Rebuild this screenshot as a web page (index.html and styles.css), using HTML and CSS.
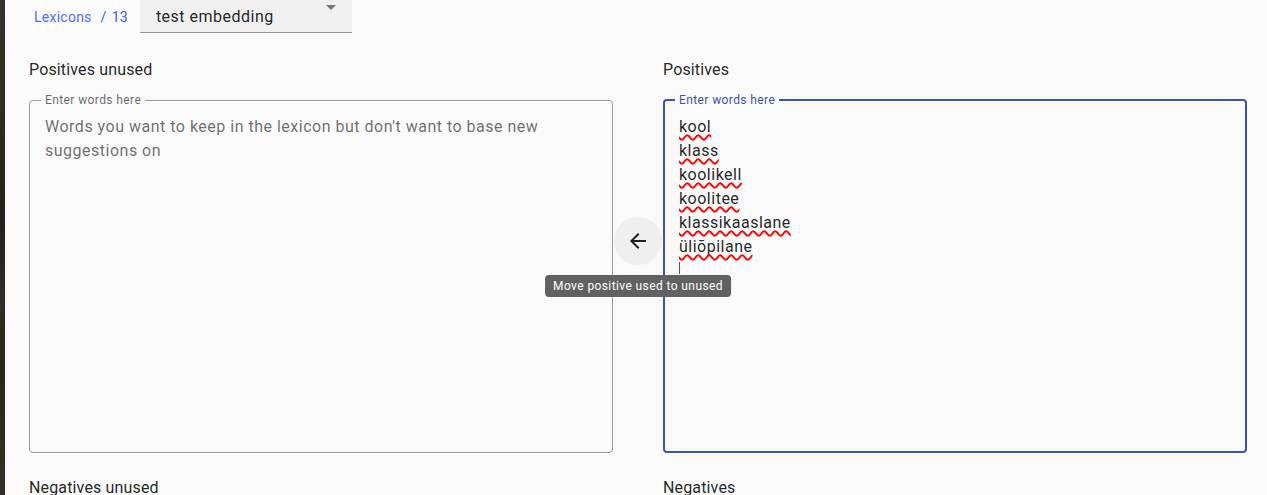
FILE: index.html
```html
<!DOCTYPE html>
<html lang="en">
<head>
<meta charset="utf-8">
<title>Lexicon</title>
<link rel="stylesheet" href="styles.css">
</head>
<body>
<div class="strip"></div>
<div class="page">
  <header class="topbar">
    <nav class="crumbs"><a class="crumb-link" href="#">Lexicons</a><span class="crumb-sep">/</span><span class="crumb-cur">13</span></nav>
    <div class="select">
      <span class="select-value">test embedding</span>
      <span class="select-arrow"></span>
    </div>
  </header>
  <main class="grid">
    <section class="cell">
      <h2 class="cell-title">Positives unused</h2>
      <fieldset class="box">
        <legend class="box-label">Enter words here</legend>
        <textarea class="box-input" placeholder="Words you want to keep in the lexicon but don't want to base new suggestions on"></textarea>
      </fieldset>
    </section>
    <div class="mid">
      <button class="round-btn" type="button" aria-label="Move positive used to unused">
        <svg viewBox="0 0 24 24" width="24" height="24"><path d="M20 11H7.83l5.59-5.59L12 4l-8 8 8 8 1.41-1.41L7.83 13H20v-2z"/></svg>
      </button>
      <div class="tooltip">Move positive used to unused</div>
    </div>
    <section class="cell">
      <h2 class="cell-title">Positives</h2>
      <fieldset class="box box-focus">
        <legend class="box-label">Enter words here</legend>
        <div class="box-input words">
          <div class="line"><span class="sp">kool</span></div>
          <div class="line"><span class="sp">klass</span></div>
          <div class="line"><span class="sp">koolikell</span></div>
          <div class="line"><span class="sp">koolitee</span></div>
          <div class="line"><span class="sp">klassikaaslane</span></div>
          <div class="line"><span class="sp">üliõpilane</span></div>
          <div class="line"><span class="caret"></span></div>
        </div>
      </fieldset>
    </section>
    <section class="cell">
      <h2 class="cell-title">Negatives unused</h2>
    </section>
    <div></div>
    <section class="cell">
      <h2 class="cell-title">Negatives</h2>
    </section>
  </main>
</div>
</body>
</html>
```

FILE: styles.css
```css
* { box-sizing: border-box; }
html, body {
  margin: 0;
  height: 495px;
  overflow: hidden;
  background: #fafafa;
  font-family: Roboto, "Liberation Sans", sans-serif;
  color: rgba(0,0,0,0.87);
}
body { display: flex; }
.strip {
  width: 5px;
  flex: none;
  background: linear-gradient(180deg, #35322b 0%, #2d2a1c 30%, #24221a 45%, #2f2d26 60%, #2a2816 75%, #33302a 100%);
}
.page { flex: 1; min-width: 0; }
.topbar {
  height: 33px;
  display: flex;
  align-items: flex-end;
  padding-left: 29px;
}
.crumbs {
  font-size: 14px;
  line-height: 20px;
  letter-spacing: 0.25px;
  padding-bottom: 6px;
  display: flex;
  gap: 5px;
}
.crumb-link { color: #536dfe; text-decoration: none; }
.crumb-sep { color: #3d5afe; margin-left: 4px; }
.crumb-cur { color: #3d5afe; }
.select {
  margin-left: 12px;
  width: 212px;
  height: 33px;
  background: #f0f0f0;
  border-bottom: 1px solid #949494;
  position: relative;
  display: flex;
  align-items: flex-end;
  padding: 0 16px 5px 16px;
  font-size: 16px;
  line-height: 20px;
  letter-spacing: 0.5px;
}
.select-value { color: rgba(0,0,0,0.87); }
.select-arrow {
  position: absolute;
  right: 16px;
  top: 5px;
  width: 0; height: 0;
  border-left: 5px solid transparent;
  border-right: 5px solid transparent;
  border-top: 5px solid #757575;
}
.grid {
  display: grid;
  grid-template-columns: 1fr 50px 1fr;
  row-gap: 23px;
  padding: 25px 20px 0 24px;
}
.cell { min-width: 0; }
.cell-title {
  margin: 0;
  font-size: 16px;
  font-weight: 400;
  line-height: 24px;
  letter-spacing: 0.15px;
  color: rgba(0,0,0,0.87);
}
.box {
  margin: 12px 0 0 0;
  padding: 9px 15px 7px 15px;
  border: 1px solid #9b9b9b;
  border-radius: 4px;
  min-width: 0;
}
.box-label {
  margin-left: -4px;
  padding: 0 4px;
  font-size: 12px;
  line-height: 12px;
  letter-spacing: 0.4px;
  color: rgba(0,0,0,0.6);
}
.box-input {
  display: block;
  width: 100%;
  height: 330px;
  margin: 0;
  padding: 0;
  border: 0;
  outline: 0;
  resize: none;
  background: transparent;
  font-family: inherit;
  font-size: 16px;
  line-height: 24px;
  letter-spacing: 0.5px;
  color: rgba(0,0,0,0.87);
}
.box-input::placeholder { color: rgba(0,0,0,0.58); }
.box-focus {
  border: 2px solid #3f51b5;
  padding: 9px 14px 6px 14px;
}
.box-focus .box-label { color: #3f51b5; }
.line { height: 24px; }
.sp {
  text-decoration: underline wavy #ff0000;
  text-decoration-thickness: 1.5px;
  text-decoration-skip-ink: none;
  text-underline-offset: 2px;
}
.caret {
  display: inline-block;
  width: 1px;
  height: 12px;
  margin-top: 3px;
  background: #3f51b5;
  vertical-align: top;
}
.mid {
  position: relative;
  display: flex;
  flex-direction: column;
  align-items: center;
  padding-top: 159px;
}
.round-btn {
  width: 48px;
  height: 48px;
  border-radius: 50%;
  border: 0;
  padding: 0;
  background: #efefef;
  display: flex;
  align-items: center;
  justify-content: center;
  fill: rgba(0,0,0,0.87);
}
.tooltip {
  position: absolute;
  top: 217px;
  left: 50%;
  transform: translateX(-50%);
  white-space: nowrap;
  background: #616161;
  color: #fff;
  font-size: 12px;
  line-height: 14px;
  letter-spacing: 0.4px;
  padding: 4px 8px;
  border-radius: 4px;
  z-index: 2;
}
```
